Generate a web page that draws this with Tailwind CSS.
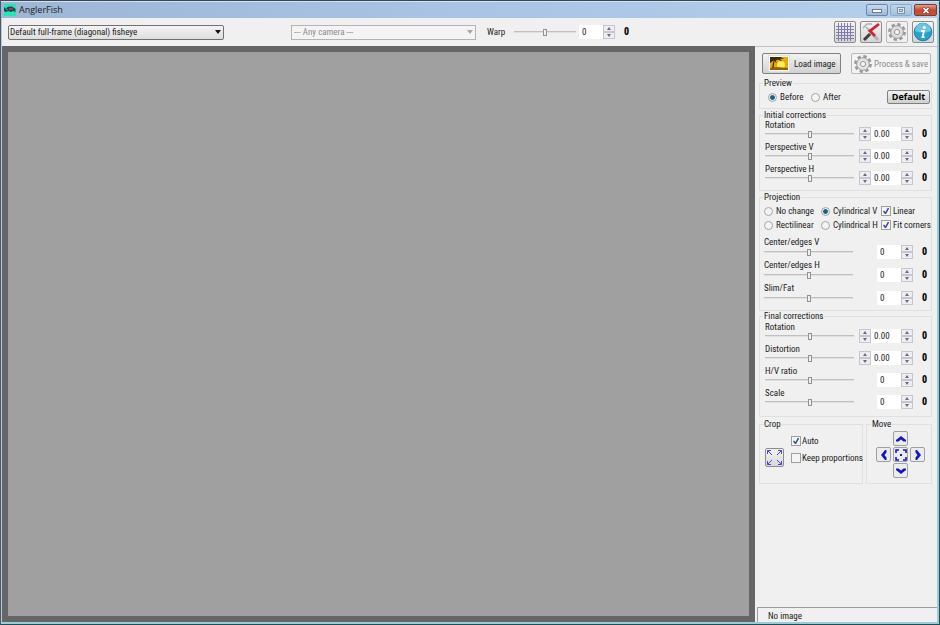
<!DOCTYPE html>
<html lang="en">
<head>
  <meta charset="UTF-8">
  <meta name="viewport" content="width=device-width, initial-scale=1.0">
  <title>AnglerFish</title>
  <script src="https://cdn.jsdelivr.net/npm/@tailwindcss/browser@4"></script>
</head>
<body class="h-screen flex flex-col border border-l-[#4c5a68] border-r-[#17525c] border-b-[#17525c] border-t-[#3a4656] font-['Roboto_Condensed','Liberation_Sans',sans-serif] text-[9px] leading-[10px] text-[#1a1a1a] overflow-hidden">

  <!-- Title bar -->
  <header class="h-[17px] shrink-0 flex items-center pl-[3px] bg-gradient-to-r from-[#9db6d6] via-[#a9c4e4] to-[#b4d0ea] border-t border-[#d5e2f0]">
    <svg class="w-3 h-3" viewBox="0 0 12 12">
      <rect width="12" height="12" fill="#1fe8b4"/>
      <path d="M0 3l2 2c1-3 6-3 8-1l2 1-1 1 1 2-3-1-2 1-3-1-2 1-2-1z" fill="#27404a"/>
      <path d="M5 4h4v2H5z" fill="#b0305a"/>
      <path d="M2 5h2v1H2z" fill="#2a9a8a"/>
    </svg>
    <h1 class="ml-[3px] font-['Open_Sans',sans-serif] text-[9px]">AnglerFish</h1>
    <div class="ml-auto flex gap-[2px] self-start mt-[2px] pr-[2px]">
      <button aria-label="Minimize" class="w-[22px] h-3 flex items-center justify-center rounded-xs border border-[#6b86a8] bg-gradient-to-b from-[#c8daee] to-[#9bb8da]">
        <svg class="w-[10px] h-[5px] mt-[2px]" viewBox="0 0 10 5"><rect x=".5" y=".5" width="9" height="3" fill="#fff" stroke="#6d7a8b"/></svg>
      </button>
      <button aria-label="Maximize" class="w-[22px] h-3 flex items-center justify-center rounded-xs border border-[#8fa9c8] bg-gradient-to-b from-[#c0d5ec] to-[#a5c1e0]">
        <svg class="w-2 h-[7px]" viewBox="0 0 8 7"><rect x=".5" y=".5" width="7" height="6" fill="#dfe8f2" stroke="#7f8fa2"/><rect x="2.5" y="2.5" width="3" height="2" fill="none" stroke="#7f8fa2"/></svg>
      </button>
      <button aria-label="Close" class="w-[23px] h-3 flex items-center justify-center rounded-xs border border-[#7a3a35] bg-gradient-to-b from-[#e3a08f] via-[#c8472c] to-[#c75136]">
        <svg class="w-2 h-[7px]" viewBox="0 0 8 7"><path d="M1 .5l6 6M7 .5l-6 6" stroke="#8b4038" stroke-width="3"/><path d="M1.500 1l5 5M6.500 1l-5 5" stroke="#fff" stroke-width="1.700"/></svg>
      </button>
    </div>
  </header>

  <div class="flex-1 min-h-0 flex flex-col bg-[#f0f0f0] border-l border-r-2 border-b-2 border-l-[#b9c9d6] border-r-[#9ccbd3] border-b-[#9ccbd3]">
    <!-- Toolbar -->
    <div class="h-7 shrink-0 flex items-center pl-[6px] pr-[3px]">
      <div class="relative w-[216px]">
        <select aria-label="Lens" class="appearance-none block w-full h-[15px] pl-px leading-[13px] border border-[#707070] rounded-xs bg-gradient-to-b from-[#f4f4f4] to-[#dedede]">
          <option>Default full-frame (diagonal) fisheye</option>
        </select>
        <svg class="absolute right-[3px] top-[5px] w-[6px] h-1 pointer-events-none" viewBox="0 0 6 4"><path d="M0 0h6L3 4z" fill="#111"/></svg>
      </div>
      <div class="relative w-[185px] ml-[67px]">
        <select aria-label="Camera" disabled class="appearance-none block w-full h-[15px] pl-[2px] leading-[13px] border border-[#b4b4b4] bg-[#f4f4f4] text-[#8c8c8c] opacity-100">
          <option>--- Any camera ---</option>
        </select>
        <svg class="absolute right-[3px] top-[5px] w-[6px] h-1 pointer-events-none" viewBox="0 0 6 4"><path d="M0 0h6L3 4z" fill="#a5a5a5"/></svg>
      </div>
      <label for="warp" class="ml-[11px] w-[27px]">Warp</label>
      <input id="warp" type="range" class="appearance-none w-[62px] h-2 bg-transparent [&::-webkit-slider-runnable-track]:h-[2px] [&::-webkit-slider-runnable-track]:bg-[#e0e0e0] [&::-webkit-slider-runnable-track]:border-t [&::-webkit-slider-runnable-track]:border-[#c0c0c0] [&::-webkit-slider-thumb]:appearance-none [&::-webkit-slider-thumb]:w-1 [&::-webkit-slider-thumb]:h-[7px] [&::-webkit-slider-thumb]:-mt-[3px] [&::-webkit-slider-thumb]:border [&::-webkit-slider-thumb]:border-[#929292] [&::-webkit-slider-thumb]:bg-[#f0f0f0]">
      <input aria-label="Warp value" value="0" class="w-6 h-[14px] ml-[3px] pl-[3px] bg-white">
      <div data-spin></div>
      <output for="warp" class="ml-[9px] text-[10px] font-extrabold text-black">0</output>

      <div class="ml-auto flex gap-1">
        <button aria-label="Grid" class="w-[22px] h-[22px] flex items-center justify-center border border-[#8c8c8c] rounded-xs bg-gradient-to-b from-[#f4f4f4] to-[#d4d4d4]">
          <svg class="w-[18px] h-[18px]" viewBox="0 0 18 18"><path d="M2.500 0v18M5.500 0v18M8.500 0v18M11.500 0v18M14.500 0v18M0 3.500h18M0 6.500h18M0 9.500h18M0 12.500h18M0 15.500h18" stroke="#7c7cae"/></svg>
        </button>
        <button aria-label="Tools" class="w-[22px] h-[22px] flex items-center justify-center border border-[#8c8c8c] rounded-xs bg-gradient-to-b from-[#f4f4f4] to-[#d4d4d4]">
          <svg class="w-5 h-5" viewBox="0 0 20 20"><path d="M2 6l4-4 5 0M5 5l2 2" fill="none" stroke="#a3b5ab" stroke-width="1.500"/><path d="M7 7l10 11" stroke="#b4b5b7" stroke-width="3"/><path d="M9 12l-6 6" stroke="#3c3c3c" stroke-width="3"/><path d="M18 2l-9 7 5 5" fill="none" stroke="#cc2430" stroke-width="2.800"/></svg>
        </button>
        <button aria-label="Settings" disabled class="w-[22px] h-[22px] flex items-center justify-center border border-[#b8b8b8] rounded-xs bg-[#f0f0f0]">
          <svg class="w-5 h-5" viewBox="0 0 20 20"><circle cx="10" cy="10" r="7.600" fill="none" stroke="#9a9a9a" stroke-width="2.600" stroke-dasharray="3.400 2.570"/><circle cx="10" cy="10" r="6.300" fill="#dedede" stroke="#9a9a9a"/><circle cx="10" cy="10" r="2.600" fill="#f4f4f4" stroke="#9a9a9a"/></svg>
        </button>
        <button aria-label="About" class="w-[22px] h-[22px] flex items-center justify-center border border-[#8c8c8c] rounded-xs bg-gradient-to-b from-[#f4f4f4] to-[#d4d4d4]">
          <svg class="w-5 h-5" viewBox="0 0 20 20"><circle cx="10" cy="10" r="8.800" fill="#2a9fcd" stroke="#1b83ad"/><path d="M2 9a8 8 0 0 1 16 0q-8 3-16 0z" fill="#6cc5e4"/><circle cx="11.300" cy="5.500" r="1.500" fill="#fff"/><path d="M8 9h3l-1.500 6h2" fill="none" stroke="#fff" stroke-width="1.800"/></svg>
        </button>
      </div>
    </div>

    <div class="flex-1 flex min-h-0">
      <!-- Image area -->
      <main class="flex-1 border-[6px] border-[#666666] bg-[#a0a0a0]"></main>

      <!-- Controls -->
      <aside class="w-[182px] shrink-0 flex flex-col">
        <div class="flex-1 pl-1 pr-[5px] pt-[6px] border-t border-[#c4c4c4]">
          <div class="flex justify-between pl-[3px] pr-px">
            <button class="w-[79px] h-[21px] flex items-center gap-1 pl-[5px] border border-[#808080] rounded-xs bg-gradient-to-b from-[#f3f3f3] to-[#d2d2d2]">
              <svg class="w-[22px] h-[17px]" viewBox="0 0 22 17">
                <rect width="22" height="17" fill="#fbfbfb" stroke="#c8c8c8"/>
                <rect x="2" y="2" width="18" height="13" fill="#e8a812"/>
                <circle cx="13" cy="10" r="4" fill="#ffee50"/>
                <path d="M2 2h11l3 2-4-.5 2 3-4-2-2 1 .5 3-2-3-1 8H4l1.500-8L2 8z" fill="#3c2a08"/>
                <path d="M2 15v-2l7-1 11 1v2z" fill="#8d6206"/>
              </svg>
              Load image
            </button>
            <button disabled class="w-20 h-[21px] flex items-center gap-px pl-px border border-[#b8b8b8] rounded-xs bg-[#f4f4f4] text-[#8c8c8c] whitespace-nowrap">
              <svg class="w-5 h-5 shrink-0" viewBox="0 0 20 20"><circle cx="10" cy="10" r="7.600" fill="none" stroke="#9a9a9a" stroke-width="2.600" stroke-dasharray="3.400 2.570"/><circle cx="10" cy="10" r="6.300" fill="#e4e4e4" stroke="#9a9a9a"/><circle cx="10" cy="10" r="2.600" fill="#f4f4f4" stroke="#9a9a9a"/></svg>
              Process &amp; save
            </button>
          </div>

          <fieldset class="mt-1 min-w-0 border border-[#e0e0e0] pl-2 pr-px pb-[2px]">
            <legend class="-ml-[5px] px-px">Preview</legend>
            <div class="flex items-center h-[18px]">
              <label class="flex items-center gap-[3px] w-[43px]"><input type="radio" name="preview" checked class="appearance-none w-[9px] h-[9px] rounded-full border border-[#a4a5a5] bg-[#f4f4f4] checked:bg-[radial-gradient(circle,#1d5f80_40%,#e4eef4_55%)]">Before</label>
              <label class="flex items-center gap-[3px]"><input type="radio" name="preview" class="appearance-none w-[9px] h-[9px] rounded-full border border-[#a4a5a5] bg-[#f4f4f4] checked:bg-[radial-gradient(circle,#1d5f80_40%,#e4eef4_55%)]">After</label>
              <button class="ml-auto w-[43px] h-[14px] leading-3 border border-[#808080] rounded-xs bg-gradient-to-b from-[#f2f2f2] to-[#cfcfcf] font-['Open_Sans',sans-serif] font-bold text-black">Default</button>
            </div>
          </fieldset>

          <fieldset class="mt-px min-w-0 border border-[#e0e0e0] pl-[5px] pb-1">
            <legend class="-ml-[2px] px-px">Initial corrections</legend>
            <div data-rows="initial"></div>
          </fieldset>

          <fieldset class="mt-px min-w-0 border border-[#e0e0e0] pl-[4px] pb-1">
            <legend class="-ml-px px-px">Projection</legend>
            <div class="grid grid-cols-[57px_60px_1fr] auto-rows-[14px] items-center pt-[2px] pb-[5px] whitespace-nowrap">
              <label class="flex items-center gap-[3px]"><input type="radio" name="projection" class="appearance-none w-[9px] h-[9px] rounded-full border border-[#a4a5a5] bg-[#f4f4f4] checked:bg-[radial-gradient(circle,#1d5f80_40%,#e4eef4_55%)]">No change</label>
              <label class="flex items-center gap-[3px]"><input type="radio" name="projection" checked class="appearance-none w-[9px] h-[9px] rounded-full border border-[#a4a5a5] bg-[#f4f4f4] checked:bg-[radial-gradient(circle,#1d5f80_40%,#e4eef4_55%)]">Cylindrical V</label>
              <label class="flex items-center gap-[2px]"><span data-check="on"></span>Linear</label>
              <label class="flex items-center gap-[3px]"><input type="radio" name="projection" class="appearance-none w-[9px] h-[9px] rounded-full border border-[#a4a5a5] bg-[#f4f4f4] checked:bg-[radial-gradient(circle,#1d5f80_40%,#e4eef4_55%)]">Rectilinear</label>
              <label class="flex items-center gap-[3px]"><input type="radio" name="projection" class="appearance-none w-[9px] h-[9px] rounded-full border border-[#a4a5a5] bg-[#f4f4f4] checked:bg-[radial-gradient(circle,#1d5f80_40%,#e4eef4_55%)]">Cylindrical H</label>
              <label class="flex items-center gap-[2px]"><span data-check="on"></span>Fit corners</label>
            </div>
            <div data-rows="projection"></div>
          </fieldset>

          <fieldset class="min-w-0 border border-[#e0e0e0] pl-[5px] pt-px pb-[6px]">
            <legend class="-ml-[2px] px-px">Final corrections</legend>
            <div data-rows="final"></div>
          </fieldset>

          <div class="flex justify-between mt-[2px]">
            <fieldset class="w-[104px] min-w-0 h-[65px] border border-[#e0e0e0] pl-[5px]">
              <legend class="-ml-[2px] px-px">Crop</legend>
              <div class="flex items-start gap-[7px] pt-[7px] whitespace-nowrap">
                <button aria-label="Expand" class="w-[19px] h-[19px] shrink-0 mt-3 flex items-center justify-center border border-[#8c8c8c] rounded-xs bg-gradient-to-b from-[#f4f4f4] to-[#d8d8d8]">
                  <svg class="w-[17px] h-[17px]" viewBox="0 0 17 17"><path d="M1.500 5V1.500H5M1.500 1.500L6 6M12 1.500h3.500V5M15.500 1.500L11 6M1.500 12v3.500H5M1.500 15.500L6 11M12 15.500h3.500V12M15.500 15.500L11 11" fill="none" stroke="#4646d0"/></svg>
                </button>
                <div class="flex flex-col gap-[7px]">
                  <label class="flex items-center gap-px"><span data-check="on"></span>Auto</label>
                  <label class="flex items-center gap-px"><span data-check="off"></span>Keep proportions</label>
                </div>
              </div>
            </fieldset>
            <fieldset class="w-[66px] min-w-0 h-[65px] border border-[#e0e0e0] pl-[9px]">
              <legend class="-ml-[5px] px-px">Move</legend>
              <div class="grid grid-cols-[repeat(3,15px)] auto-rows-[15px] gap-x-[2px] gap-y-px pt-[2px]">
                <button aria-label="Up" class="col-start-2 flex items-center justify-center border border-[#a0a0a0] rounded-xs bg-[#ececec]"><svg class="w-[10px] h-[10px]" viewBox="0 0 10 10"><path d="M0 7.500V6l5-4 5 4v1.500H7.500L5 5.500 2.500 7.500z" fill="#1414c8"/></svg></button>
                <button aria-label="Left" class="col-start-1 flex items-center justify-center border border-[#a0a0a0] rounded-xs bg-[#ececec]"><svg class="w-[10px] h-[10px]" viewBox="0 0 10 10"><path d="M7.500 0H6L2 5l4 5h1.500V7.500L5.500 5l2-2.500z" fill="#1414c8"/></svg></button>
                <button aria-label="Center" class="flex items-center justify-center border border-[#a0a0a0] rounded-xs bg-[#ececec]"><svg class="w-3 h-3" viewBox="0 0 12 12"><path d="M1 4V1h3M8 1h3v3M11 8v3H8M4 11H1V8" fill="none" stroke="#1414c8" stroke-width="1.600"/><rect x="5" y="5" width="2" height="2" fill="#1414c8"/></svg></button>
                <button aria-label="Right" class="flex items-center justify-center border border-[#a0a0a0] rounded-xs bg-[#ececec]"><svg class="w-[10px] h-[10px]" viewBox="0 0 10 10"><path d="M2.500 0H4l4 5-4 5H2.500V7.500l2-2.500-2-2.500z" fill="#1414c8"/></svg></button>
                <button aria-label="Down" class="col-start-2 flex items-center justify-center border border-[#a0a0a0] rounded-xs bg-[#ececec]"><svg class="w-[10px] h-[10px]" viewBox="0 0 10 10"><path d="M0 2.500V4l5 4 5-4V2.500H7.500L5 4.500 2.500 2.500z" fill="#1414c8"/></svg></button>
              </div>
            </fieldset>
          </div>
        </div>

        <footer class="h-[15px] ml-[2px] pl-[10px] pt-[3px] border-t border-l border-[#9c9c9c]">No image</footer>
      </aside>
    </div>
  </div>

  <script>
    const spinner = `
      <div class="w-3 h-[14px] flex flex-col">
        <button aria-label="Increase" class="flex-1 flex items-center justify-center border border-[#c6c6ce] bg-[#ededf2]"><svg class="w-1 h-[3px]" viewBox="0 0 4 3"><path d="M0 3h4L2 0z" fill="#6a6a88"/></svg></button>
        <button aria-label="Decrease" class="flex-1 flex items-center justify-center border border-[#c6c6ce] bg-[#ededf2]"><svg class="w-1 h-[3px]" viewBox="0 0 4 3"><path d="M0 0h4L2 3z" fill="#6a6a88"/></svg></button>
      </div>`;

    // fine: how many of the rows have two decimals and a second spinner
    const groups = {
      initial: { fine: 3, rowClass: 'h-[22px]', items: ['Rotation', 'Perspective V', 'Perspective H'] },
      projection: { fine: 0, rowClass: 'h-[23px]', items: ['Center/edges V', 'Center/edges H', 'Slim/Fat'] },
      final: { fine: 2, rowClass: 'h-[22px]', items: ['Rotation', 'Distortion', 'H/V ratio', 'Scale'] },
    };

    function row(id, name, fine, rowClass) {
      return `
        <div class="flex items-end ${rowClass}">
          <div class="h-full w-[90px] flex flex-col justify-between pb-1">
            <label for="${id}">${name}</label>
            <input id="${id}" type="range" class="appearance-none w-[89px] h-2 bg-transparent [&::-webkit-slider-runnable-track]:h-[2px] [&::-webkit-slider-runnable-track]:bg-[#e0e0e0] [&::-webkit-slider-runnable-track]:border-t [&::-webkit-slider-runnable-track]:border-[#c0c0c0] [&::-webkit-slider-thumb]:appearance-none [&::-webkit-slider-thumb]:w-1 [&::-webkit-slider-thumb]:h-[7px] [&::-webkit-slider-thumb]:-mt-[3px] [&::-webkit-slider-thumb]:border [&::-webkit-slider-thumb]:border-[#929292] [&::-webkit-slider-thumb]:bg-[#f0f0f0]">
          </div>
          <div class="flex-1 flex items-center justify-end mb-px pr-1">
            ${fine ? spinner : ''}
            <input aria-label="${name} value" value="${fine ? '0.00' : '0'}" class="${fine ? 'w-[30px]' : 'w-6'} h-[14px] pl-[3px] bg-white">
            ${spinner}
            <output for="${id}" class="w-[14px] text-right text-[10px] font-extrabold text-black">0</output>
          </div>
        </div>`;
    }

    document.querySelectorAll('[data-rows]').forEach(el => {
      const key = el.dataset.rows;
      const g = groups[key];
      el.innerHTML = g.items.map((name, i) => row(`${key}-${i}`, name, i < g.fine, g.rowClass)).join('');
    });

    document.querySelectorAll('[data-spin]').forEach(el => { el.outerHTML = spinner; });

    document.querySelectorAll('[data-check]').forEach(el => {
      const on = el.dataset.check === 'on';
      el.outerHTML = `
        <span class="relative w-[10px] h-[10px]">
          <input type="checkbox" ${on ? 'checked' : ''} class="peer appearance-none block w-[10px] h-[10px] border border-[#9e9f9f] bg-[#f4f4f4]">
          <svg class="hidden peer-checked:block absolute left-[2px] top-[2px] w-[6px] h-[6px] pointer-events-none" viewBox="0 0 6 6"><path d="M.5 3l2 2.500L5.500 0" fill="none" stroke="#3a4a8c" stroke-width="1.500"/></svg>
        </span>`;
    });
  </script>
</body>
</html>
